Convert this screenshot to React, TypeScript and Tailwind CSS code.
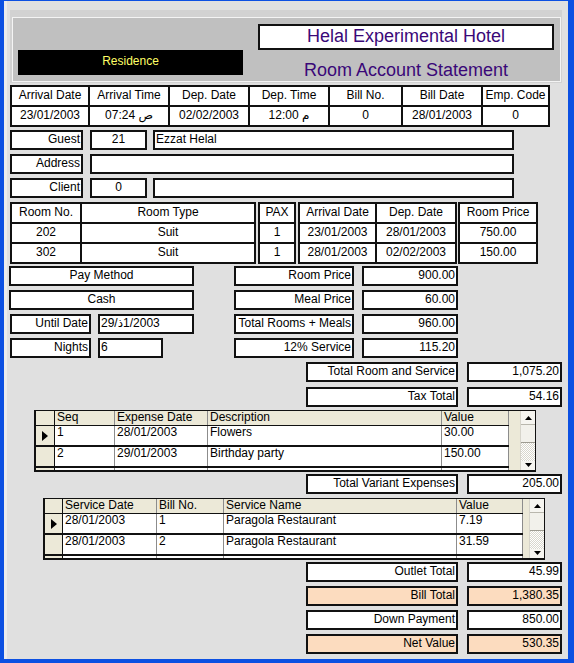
import React from 'react';

type Align = 'left' | 'center' | 'right';

const ALIGN: Record<Align, string> = {
  left: 'justify-start pl-[1px]',
  center: 'justify-center',
  right: 'justify-end pr-[1px]',
};

function Field({
  className = '',
  align = 'left',
  tone = 'bg-white',
  children,
}: {
  className?: string;
  align?: Align;
  tone?: string;
  children?: React.ReactNode;
}) {
  return (
    <div
      className={`flex h-[20px] items-center overflow-hidden whitespace-nowrap border-2 border-[#111111] pb-[3px] text-[12px] leading-[12px] ${tone} ${ALIGN[align]} ${className}`}
    >
      {children}
    </div>
  );
}

type TableCol = { w: string; head: string; vals: string[] };

// A run of bordered boxes that share their edges, one column per entry.
function ColGroup({ cols, className = '' }: { cols: TableCol[]; className?: string }) {
  return (
    <div className={`flex border-l-2 border-t-2 border-[#111111] ${className}`}>
      {cols.map((c) => (
        <div key={c.head} className={c.w}>
          {[c.head, ...c.vals].map((t, i) => (
            <div
              key={i}
              className="flex h-[20px] items-center justify-center whitespace-nowrap border-b-2 border-r-2 border-[#111111] bg-white pb-[3px] text-[12px] leading-[12px]"
            >
              {t}
            </div>
          ))}
        </div>
      ))}
    </div>
  );
}

function UpArrow() {
  return (
    <svg width="7" height="4" viewBox="0 0 7 4">
      <path d="M3.5 0L7 4H0Z" fill="#000" />
    </svg>
  );
}

function DownArrow() {
  return (
    <svg width="7" height="4" viewBox="0 0 7 4">
      <path d="M0 0H7L3.5 4Z" fill="#000" />
    </svg>
  );
}

function ScrollBar() {
  return (
    <div className="flex w-[15px] flex-col border-l border-[#d6d4ca]">
      <div className="flex h-[14px] items-center justify-center border-b border-[#b9b7ad] bg-[#f6f5f0]">
        <UpArrow />
      </div>
      <div className="h-[18px] border-b border-[#9e9c92] bg-[#f2f1eb]" />
      <div className="flex-1 bg-[image:repeating-conic-gradient(#ffffff_0%_25%,#d9d7cd_0%_50%)] bg-[length:2px_2px]" />
      <div className="flex h-[9px] items-start justify-center bg-[#f6f5f0] pt-[2px]">
        <DownArrow />
      </div>
    </div>
  );
}

function RowMarker() {
  return (
    <svg width="6" height="10" viewBox="0 0 6 10">
      <path d="M0 0L6 5L0 10Z" fill="#000" />
    </svg>
  );
}

type GridCol = { w: string; head: string };

function DataGrid({
  className,
  selW,
  cols,
  rows,
  fillW,
}: {
  className: string;
  selW: string;
  cols: GridCol[];
  rows: string[][];
  fillW: string;
}) {
  return (
    <div
      className={`flex h-[62px] w-[502px] border-b-2 border-l-2 border-r border-t border-[#111111] bg-[#ece9d8] text-[12px] leading-[12px] ${className}`}
    >
      <div className="flex flex-col">
        <div className="flex h-[15px] border-b border-[#111111]">
          <div className={`${selW} border-r border-[#111111]`} />
          {cols.map((c) => (
            <div key={c.head} className={`${c.w} overflow-hidden whitespace-nowrap border-r border-[#8c8c8c] pl-[2px]`}>
              {c.head}
            </div>
          ))}
        </div>
        {rows.map((r, i) => (
          <div key={i} className="flex h-[21px] border-b-2 border-[#111111]">
            <div className={`${selW} flex items-center justify-center border-r border-[#111111] bg-[#ece9d8]`}>
              {i === 0 && <RowMarker />}
            </div>
            {r.map((v, j) => (
              <div key={j} className={`${cols[j].w} overflow-hidden whitespace-nowrap border-r border-[#8c8c8c] bg-white pl-[2px]`}>
                {v}
              </div>
            ))}
          </div>
        ))}
        <div className="flex flex-1">
          <div className={`${selW} border-r border-[#111111] bg-[#ece9d8]`} />
          {cols.map((c) => (
            <div key={c.head} className={`${c.w} border-r border-[#8c8c8c] bg-white`} />
          ))}
        </div>
      </div>
      <div className={fillW} />
      <ScrollBar />
    </div>
  );
}

function TotalRow({
  label,
  value,
  tone = 'bg-white',
  className = '',
}: {
  label: string;
  value: string;
  tone?: string;
  className?: string;
}) {
  return (
    <div className={`ml-[302px] flex ${className}`}>
      <Field className="w-[152px]" align="right" tone={tone}>
        {label}
      </Field>
      <Field className="ml-[9px] w-[95px]" align="right" tone={tone}>
        {value}
      </Field>
    </div>
  );
}

const dateCols: TableCol[] = [
  { w: 'w-[78px]', head: 'Arrival Date', vals: ['23/01/2003'] },
  { w: 'w-[80px]', head: 'Arrival Time', vals: ['07:24 ص'] },
  { w: 'w-[80px]', head: 'Dep. Date', vals: ['02/02/2003'] },
  { w: 'w-[80px]', head: 'Dep. Time', vals: ['12:00 م'] },
  { w: 'w-[73px]', head: 'Bill No.', vals: ['0'] },
  { w: 'w-[80px]', head: 'Bill Date', vals: ['28/01/2003'] },
  { w: 'w-[67px]', head: 'Emp. Code', vals: ['0'] },
];

const priceRows = [
  ['Room Price', '900.00'],
  ['Meal Price', '60.00'],
  ['Total Rooms + Meals', '960.00'],
  ['12% Service', '115.20'],
];

export default function App() {
  return (
    <div className="h-[663px] w-[574px] bg-[#0c50e2] pb-[4px] pl-[4px] pr-[6px] pt-[1px] font-['Liberation_Sans','DejaVu_Sans',sans-serif] text-black">
      <div className="h-full overflow-hidden bg-[#e0e0e0] shadow-[inset_3px_0_0_#ececec]">
        {/* Form header */}
        <div className="ml-[6px] mt-[9px] h-[73px] w-[552px] bg-[#d2d2d2] pb-[1px] pl-[2px] pr-[1px] pt-[7px]">
          <div className="flex h-full border border-[#f4f4f4] bg-[#c0c0c0]">
            <div className="ml-[5px] flex w-[225px] flex-col justify-end pb-[6px]">
              <div className="flex h-[25px] items-center justify-center bg-black pb-[4px] text-[12px] leading-[12px] text-[#ffff66]">
                Residence
              </div>
            </div>
            <div className="ml-[15px] w-[296px] pt-[6px]">
              <div className="flex h-[26px] items-center justify-center border-2 border-[#111111] bg-white pb-[3px] text-[18px] leading-[18px] text-[#3a0878]">
                Helal Experimental Hotel
              </div>
              <div className="mt-[10px] text-center text-[18px] leading-[20px] text-[#3a0878]">Room Account Statement</div>
            </div>
          </div>
        </div>

        {/* Stay dates */}
        <ColGroup className="ml-[6px] mt-[2px] w-fit" cols={dateCols} />

        {/* Guest */}
        <div className="ml-[6px] mt-[3px] flex">
          <Field className="w-[73px]" align="right">
            Guest
          </Field>
          <Field className="ml-[7px] w-[57px]" align="center">
            21
          </Field>
          <Field className="ml-[6px] w-[361px]">Ezzat Helal</Field>
        </div>
        <div className="ml-[6px] mt-[4px] flex">
          <Field className="w-[73px]" align="right">
            Address
          </Field>
          <Field className="ml-[7px] w-[424px]" />
        </div>
        <div className="ml-[6px] mt-[4px] flex">
          <Field className="w-[73px]" align="right">
            Client
          </Field>
          <Field className="ml-[7px] w-[57px]" align="center">
            0
          </Field>
          <Field className="ml-[6px] w-[361px]" />
        </div>

        {/* Rooms */}
        <div className="ml-[6px] mt-[4px] flex">
          <ColGroup
            cols={[
              { w: 'w-[70px]', head: 'Room No.', vals: ['202', '302'] },
              { w: 'w-[174px]', head: 'Room Type', vals: ['Suit', 'Suit'] },
            ]}
          />
          <ColGroup className="ml-[2px]" cols={[{ w: 'w-[36px]', head: 'PAX', vals: ['1', '1'] }]} />
          <ColGroup
            className="ml-[2px]"
            cols={[
              { w: 'w-[77px]', head: 'Arrival Date', vals: ['23/01/2003', '28/01/2003'] },
              { w: 'w-[80px]', head: 'Dep. Date', vals: ['28/01/2003', '02/02/2003'] },
            ]}
          />
          <ColGroup className="ml-[1px]" cols={[{ w: 'w-[78px]', head: 'Room Price', vals: ['750.00', '150.00'] }]} />
        </div>

        {/* Payment and prices */}
        <div className="ml-[5px] mt-[2px] flex">
          <div className="flex w-[185px] flex-col gap-[4px]">
            <Field align="center">Pay Method</Field>
            <Field align="center">Cash</Field>
            <div className="flex">
              <Field className="ml-[1px] w-[81px]" align="right">
                Until Date
              </Field>
              <Field className="ml-[7px] w-[96px]">
                29/<bdi>ذ</bdi>1/2003
              </Field>
            </div>
            <div className="flex">
              <Field className="ml-[1px] w-[81px]" align="right">
                Nights
              </Field>
              <Field className="ml-[7px] w-[65px]">6</Field>
            </div>
          </div>
          <div className="ml-[40px] flex flex-col gap-[4px]">
            {priceRows.map(([l, v]) => (
              <div key={l} className="flex">
                <Field className="w-[120px]" align="right">
                  {l}
                </Field>
                <Field className="ml-[8px] w-[96px]" align="right">
                  {v}
                </Field>
              </div>
            ))}
          </div>
        </div>

        <TotalRow className="mt-[4px]" label="Total Room and Service" value="1,075.20" />
        <TotalRow className="mt-[5px]" label="Tax Total" value="54.16" />

        {/* Variant expenses */}
        <DataGrid
          className="ml-[30px] mt-[3px]"
          selW="w-[19px]"
          fillW="w-[11px]"
          cols={[
            { w: 'w-[60px]', head: 'Seq' },
            { w: 'w-[93px]', head: 'Expense Date' },
            { w: 'w-[234px]', head: 'Description' },
            { w: 'w-[67px]', head: 'Value' },
          ]}
          rows={[
            ['1', '28/01/2003', 'Flowers', '30.00'],
            ['2', '29/01/2003', 'Birthday party', '150.00'],
          ]}
        />
        <TotalRow className="mt-[2px]" label="Total Variant Expenses" value="205.00" />

        {/* Outlet services */}
        <DataGrid
          className="ml-[39px] mt-[4px]"
          selW="w-[18px]"
          fillW="w-[6px]"
          cols={[
            { w: 'w-[94px]', head: 'Service Date' },
            { w: 'w-[67px]', head: 'Bill No.' },
            { w: 'w-[233px]', head: 'Service Name' },
            { w: 'w-[66px]', head: 'Value' },
          ]}
          rows={[
            ['28/01/2003', '1', 'Paragola Restaurant', '7.19'],
            ['28/01/2003', '2', 'Paragola Restaurant', '31.59'],
          ]}
        />

        <TotalRow className="mt-[2px]" label="Outlet Total" value="45.99" />
        <TotalRow className="mt-[4px]" label="Bill Total" value="1,380.35" tone="bg-[#fcdcbf]" />
        <TotalRow className="mt-[4px]" label="Down Payment" value="850.00" />
        <TotalRow className="mt-[4px]" label="Net Value" value="530.35" tone="bg-[#fcdcbf]" />
      </div>
    </div>
  );
}
